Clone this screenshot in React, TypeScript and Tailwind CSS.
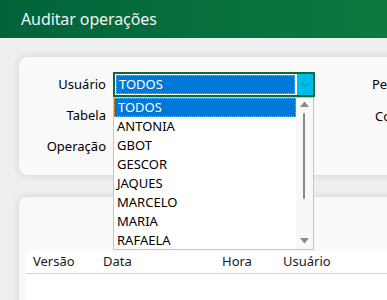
import React from "react";

const font = { fontFamily: '"Noto Sans", "Open Sans", sans-serif' };

function Combo({ active }: { active?: boolean }) {
  return (
    <div
      className={
        "relative h-[25px] bg-white " +
        (active ? "w-[202px] border-2 border-[#0b6b3a]" : "w-[199px] border border-[#7a7a7a]")
      }
    >
      {active && (
        <div className="absolute left-[1px] top-[1px] bottom-[1px] right-[18px] border border-dotted border-[#f0a030] bg-[#0078d7] flex items-center pl-[2px] text-white text-[13px] leading-none">
          TODOS
        </div>
      )}
      <div
        className={
          "absolute right-0 top-0 bottom-0 w-[16px] flex items-center justify-center " +
          (active ? "bg-[#00bce8]" : "bg-white")
        }
      >
        <svg width="9" height="6" viewBox="0 0 9 6">
          <path d="M0.5 0.8 L4.5 4.8 L8.5 0.8" fill="none" stroke="#5a6a78" strokeWidth="1" />
        </svg>
      </div>
    </div>
  );
}

export default function App() {
  const items = ["TODOS", "ANTONIA", "GBOT", "GESCOR", "JAQUES", "MARCELO", "MARIA", "RAFAELA"];
  return (
    <div className="relative w-[387px] h-[300px] overflow-hidden bg-[#efefef] text-black" style={font}>
      <div className="h-[38px] bg-gradient-to-r from-[#01633a] to-[#0c7a3f] flex items-center pl-[21px]">
        <span className="text-[16px] text-[#f2f2f2] leading-none tracking-[-0.1px]">Auditar operações</span>
      </div>

      <div className="pl-[19px] pt-[19px] flex flex-col gap-[22px]">
        <div className="w-[420px] h-[118px] rounded-[8px] bg-[#f9f9f9] shadow-[0_0_8px_rgba(0,0,0,0.12)] relative">
          <div className="grid grid-cols-[87px_202px] gap-x-[7px] gap-y-[6px] pt-[15px] text-[13px] items-center">
            <div className="text-right">Usuário</div>
            <Combo active />
            <div className="text-right">Tabela</div>
            <Combo />
            <div className="text-right">Operação</div>
            <Combo />
          </div>
          <div className="absolute left-[353px] top-[18px] text-[13px]">Período</div>
          <div className="absolute left-[356px] top-[50px] text-[13px]">Coluna</div>
        </div>

        <div className="w-[420px] h-[140px] rounded-[8px] bg-[#f9f9f9] shadow-[0_0_8px_rgba(0,0,0,0.12)] pt-[54px] pl-[7px]">
          <div className="bg-white h-full">
            <div className="h-[23px] border-b border-[#d4d4d4] flex items-center text-[13px] text-[#1a1a1a]">
              <span className="w-[77px] pl-[7px]">Versão</span>
              <span className="w-[119px]">Data</span>
              <span className="w-[61px]">Hora</span>
              <span>Usuário</span>
            </div>
          </div>
        </div>
      </div>

      <div className="absolute left-[113px] top-[97px] w-[201px] h-[153px] bg-white border border-[#c4c4c4] flex">
        <div className="flex-1 flex flex-col text-[13px]">
          {items.map((it, i) => (
            <div
              key={it}
              className={
                "h-[19px] flex items-center pl-[3px] " +
                (i === 0 ? "bg-[#0078d7] text-white border border-dotted border-[#f0a030] pl-[2px]" : "text-black")
              }
            >
              {it}
            </div>
          ))}
        </div>
        <div className="w-[17px] bg-[#f8f8f8] relative">
          <svg className="absolute left-[4px] top-[3px]" width="9" height="6" viewBox="0 0 9 6">
            <path d="M0 6 L4.5 0.5 L9 6 Z" fill="#8a8a8a" />
          </svg>
          <div className="absolute left-[7px] top-[15px] w-[2px] h-[86px] bg-[#8a8a8a] rounded-full" />
          <svg className="absolute left-[4px] bottom-[5px]" width="9" height="6" viewBox="0 0 9 6">
            <path d="M0 0 L9 0 L4.5 5.5 Z" fill="#8a8a8a" />
          </svg>
        </div>
      </div>
    </div>
  );
}
